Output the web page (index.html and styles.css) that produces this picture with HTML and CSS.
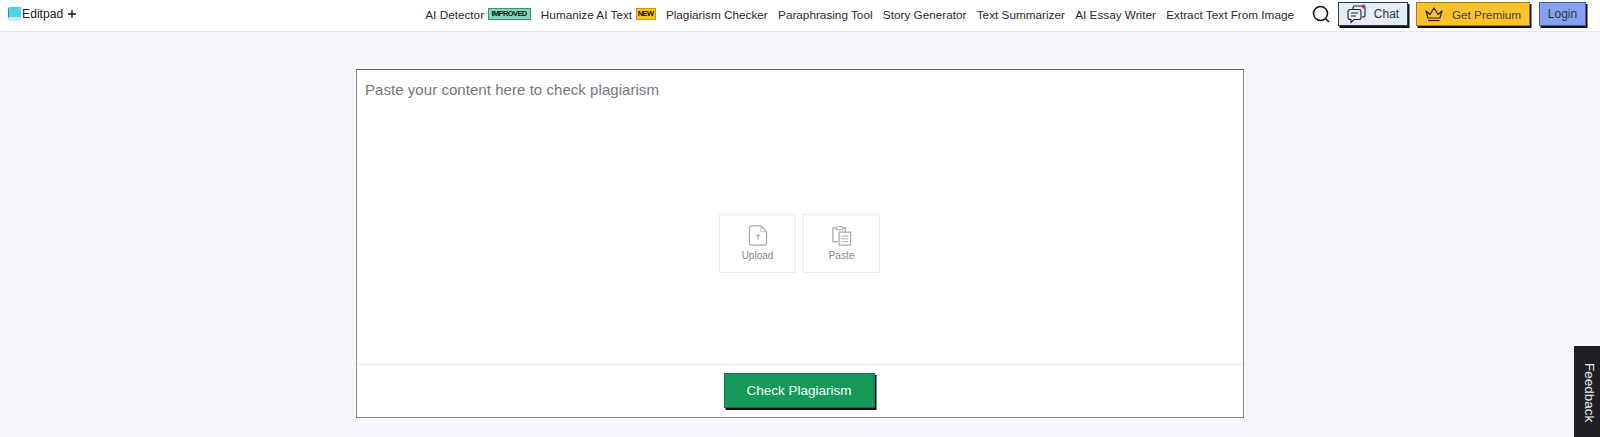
FILE: index.html
```html
<!DOCTYPE html>
<html lang="en">
<head>
<meta charset="utf-8">
<title>Plagiarism Checker</title>
<link rel="stylesheet" href="styles.css">
</head>
<body>
<header class="topbar">
  <a class="logo" href="#">
    <svg class="logo-icon" viewBox="0 0 14 14" width="14" height="14"><path d="M2 0h12v10H2z" fill="#4fd3e6"/><path d="M1 2l1-2v10l-1 2z" fill="#2a8fb0"/><path d="M1 12l1-2h12v2.500l-1 1.500H2z" fill="#bfeaf2"/></svg>
    <span>Editpad</span>
    <svg class="logo-plus" viewBox="0 0 8 8" width="8" height="8"><path d="M4 0v8M0 4h8" stroke="#111" stroke-width="1.300"/></svg>
  </a>
  <nav class="nav">
    <a class="nav-link" href="#">AI Detector<span class="badge badge-green">IMPROVED</span></a>
    <a class="nav-link" href="#">Humanize AI Text<span class="badge badge-yellow">NEW</span></a>
    <a class="nav-link" href="#">Plagiarism Checker</a>
    <a class="nav-link" href="#">Paraphrasing Tool</a>
    <a class="nav-link" href="#">Story Generator</a>
    <a class="nav-link" href="#">Text Summarizer</a>
    <a class="nav-link" href="#">AI Essay Writer</a>
    <a class="nav-link" href="#">Extract Text From Image</a>
  </nav>
  <svg class="search" viewBox="0 0 18 18" width="18" height="18"><circle cx="8.500" cy="8.500" r="7" fill="none" stroke="#111" stroke-width="1.500"/><path d="M13.500 13.500l3.500 3.500" stroke="#111" stroke-width="1.500"/></svg>
  <a class="btn btn-chat" href="#">
    <svg viewBox="0 0 20 20" width="20" height="20"><path d="M6 5V4a2 2 0 0 1 2-2h8a2 2 0 0 1 2 2v7a2 2 0 0 1-2 2h-1" fill="none" stroke="#222" stroke-width="1.100"/><path d="M3 5.500h9a2 2 0 0 1 2 2v6a2 2 0 0 1-2 2H7l-3 3v-3H3a2 2 0 0 1-2-2v-6a2 2 0 0 1 2-2z" fill="none" stroke="#222" stroke-width="1.100"/><path d="M4 9h7M4 12h5" stroke="#222" stroke-width="1"/><circle cx="16.500" cy="2.500" r="2" fill="#d9363e"/></svg>
    <span>Chat</span>
  </a>
  <a class="btn btn-premium" href="#">
    <svg viewBox="0 0 18 15" width="18" height="15"><path d="M1 4l4 3.500L9 1l4 6.500L17 4l-2 7H3z" fill="none" stroke="#222" stroke-width="1.200" stroke-linejoin="round"/><path d="M3.500 13.500h11" stroke="#222" stroke-width="1.200"/></svg>
    <span>Get Premium</span>
  </a>
  <a class="btn btn-login" href="#">Login</a>
</header>

<main class="page">
  <section class="editor">
    <div class="editor-body">
      <p class="placeholder">Paste your content here to check plagiarism</p>
      <div class="actions">
        <button class="action" type="button">
          <svg viewBox="0 0 20 22" width="20" height="21"><path d="M3 1h10l6 6v12a2 2 0 0 1-2 2H3a2 2 0 0 1-2-2V3a2 2 0 0 1 2-2z" fill="none" stroke="#a9a9ad" stroke-width="1.300"/><path d="M13 1v6h6" fill="none" stroke="#c4c4c8" stroke-width="1"/><path d="M10 15V10M8 12l2-2 2 2" fill="none" stroke="#88888c" stroke-width="1"/></svg>
          <span>Upload</span>
        </button>
        <button class="action" type="button">
          <svg viewBox="0 0 21 22" width="21" height="21"><path d="M5 3H1.500v14.500H7" fill="none" stroke="#a9a9ad" stroke-width="1.300"/><path d="M5 3.500C5 1 12 1 12 3.500V5H5z" fill="none" stroke="#a9a9ad" stroke-width="1.200"/><path d="M12 3h2.500v4" fill="none" stroke="#a9a9ad" stroke-width="1.300"/><path d="M8 7.500h12v13.500H8z" fill="none" stroke="#a9a9ad" stroke-width="1.300"/><path d="M10.500 11.500h7M10.500 14.500h7M10.500 17.500h7" stroke="#a9a9ad" stroke-width="1"/></svg>
          <span>Paste</span>
        </button>
      </div>
    </div>
    <div class="editor-foot">
      <button class="check" type="button">Check Plagiarism</button>
    </div>
  </section>
</main>

<a class="feedback" href="#"><span>Feedback</span></a>
</body>
</html>
```
FILE: styles.css
```css
* { box-sizing: border-box; }
html, body { margin: 0; height: 437px; overflow: hidden; }
body {
  background: #f5f7fd;
  font-family: "Liberation Sans", Arial, sans-serif;
  color: #222;
  position: relative;
}
a { color: inherit; text-decoration: none; }

.topbar {
  height: 32px;
  background: #fff;
  border-bottom: 1px solid #e6e6ea;
  display: flex;
  align-items: center;
  padding: 0 14px 3px 7px;
}
.logo { display: flex; align-items: center; font-size: 12.200px; color: #222; }
.logo-icon { margin-right: 1px; }
.logo-plus { margin-left: 5px; }

.nav { margin-left: auto; display: flex; align-items: center; gap: 10.300px; }
.nav-link { display: flex; align-items: center; font-size: 11.750px; color: #2a2a2a; white-space: nowrap; }
.badge {
  margin-left: 3.500px;
  height: 12px;
  font-size: 7.500px;
  font-weight: 700;
  line-height: 10px;
  letter-spacing: -0.600px;
  color: #111;
  border: 1px solid #333;
  display: block;
}
.badge-green { width: 43px; text-align: center; background: #7fd8bd; border-color: #3e8f78; }
.badge-yellow { width: 20px; text-align: center; background: #f5c227; border-color: #d09a10; }

.search { margin-left: 18px; flex: none; }
.btn {
  height: 24px;
  margin-left: 8px;
  display: flex;
  align-items: center;
  justify-content: center;
  font-size: 12px;
  color: #333;
  border: 1px solid #2c3a4a;
  box-shadow: 1.500px 2px 0 #111;
  flex: none;
}
.btn-chat { width: 70px; background: #e4eef8; gap: 7px; }
.btn-premium { width: 114px; background: #fbc22b; gap: 9px; font-size: 11.750px; color: #444; border-color: #a67c10; }
.btn-login { width: 47px; background: #87a1ee; border-color: #3f5cae; margin-left: 9px; color: #2c3550; }

.page { display: flex; justify-content: center; padding-top: 37px; }
.editor {
  width: 888px;
  height: 349px;
  margin-left: -1px;
  background: #fff;
  border: 1px solid;
  border-color: #66666e #8d8d93 #85858b #8d8d93;
  display: flex;
  flex-direction: column;
}
.editor-body { height: 294px; padding: 11px 8.500px 0; display: flex; flex-direction: column; }
.placeholder { margin: 0; font-size: 15px; line-height: 18px; color: #77777b; letter-spacing: 0.050px; }
.actions { display: flex; justify-content: center; gap: 7px; margin-top: 115px; }
.action {
  width: 77px;
  height: 59px;
  padding: 10px 0 0;
  background: #fff;
  border: 1px solid #ececf0;
  display: flex;
  flex-direction: column;
  align-items: center;
  gap: 4px;
  font-family: inherit;
  font-size: 10px;
  color: #88888c;
}
.action svg { display: block; }
.editor-foot {
  flex: 1;
  margin-right: 1px;
  border-top: 1px solid #e9e6ec;
  display: flex;
  justify-content: center;
  padding-top: 8px;
}
.check {
  width: 151px;
  height: 35px;
  background: #159a5c;
  color: #f2fff6;
  border: 1px solid #1c6a4b;
  box-shadow: 1.500px 2px 0 #0a0a0a;
  font-family: inherit;
  font-size: 13.500px;
  padding: 0;
}
.feedback {
  position: absolute;
  right: 0;
  top: 346px;
  width: 26px;
  height: 91px;
  background: #1f1f23;
  color: #f0f0f0;
  font-size: 13.500px;
  display: flex;
  justify-content: center;
  padding-left: 5px;
}
.feedback span { writing-mode: vertical-rl; padding-top: 17px; }
```
